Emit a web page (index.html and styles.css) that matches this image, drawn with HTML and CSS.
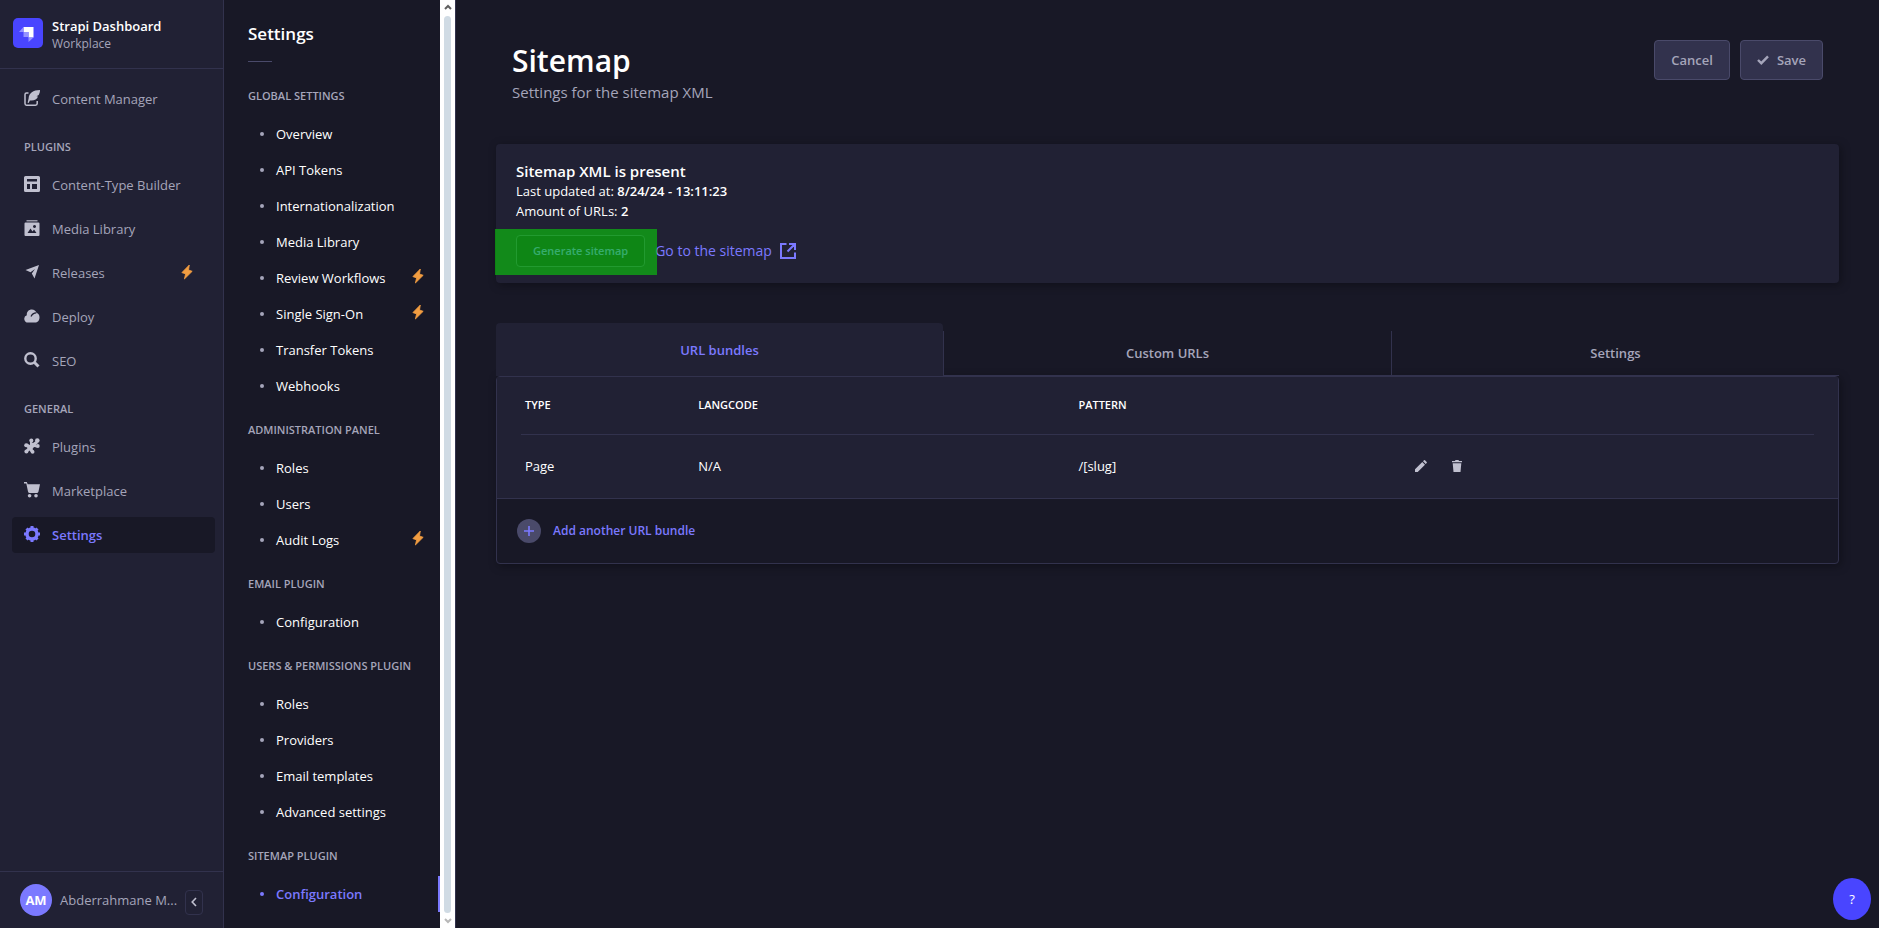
FILE: index.html
```html
<!DOCTYPE html>
<html lang="en">
<head>
<meta charset="utf-8">
<title>Sitemap - Strapi Dashboard</title>
<link rel="stylesheet" href="styles.css">
</head>
<body>
<svg class="defs" aria-hidden="true">
  <symbol id="bolt" viewBox="0 0 12 16"><path d="M8.300 1 .9 8.600 4.600 9.900 3.400 15 11.200 7.300 7.500 6z" stroke="currentColor" stroke-width=".8" stroke-linejoin="round"/></symbol>
</svg>
<div class="app">
  <nav class="nav" aria-label="Main">
    <div class="brand">
      <svg class="logo" viewBox="0 0 30 30"><rect width="30" height="30" rx="5" fill="#4945ff"/><path d="M10.500 9H20.500V19.500H15.500V14H10.500z" fill="#fff"/><path d="M10.500 9V14H6z" fill="#9593ff"/><path d="M10.500 14H15.500V19H10.500z" fill="#9593ff"/><path d="M15.500 19.500H20.500L15.500 24z" fill="#9593ff"/></svg>
      <div class="brand-text">
        <div class="brand-name">Strapi Dashboard</div>
        <div class="brand-sub">Workplace</div>
      </div>
    </div>
    <div class="nav-body">
      <ul class="nav-list">
        <li><a class="nav-link" href="#"><svg class="icon" viewBox="0 0 16 16"><path d="M4.500 3H2.500Q1 3 1 4.500V13.500Q1 15.200 2.500 15.200H11.500Q13.200 15.200 13.200 13.500V11" fill="none" stroke="currentColor" stroke-width="1.500"/><path d="M16 0C9 0 5 3 4.600 8.500L3.600 12.800l1 .3 1.300-2.600C10 11 13 9.500 14 6.500l-1.500-.3 2.200-1.300C15.500 3.500 16 2 16 0z"/></svg>Content Manager</a></li>
      </ul>
      <h2 class="nav-label">Plugins</h2>
      <ul class="nav-list">
        <li><a class="nav-link" href="#"><svg class="icon" viewBox="0 0 16 16"><path fill-rule="evenodd" d="M1.500 0h13Q16 0 16 1.500v13Q16 16 14.500 16h-13Q0 16 0 14.500v-13Q0 0 1.500 0zM3 3v2.500h10V3zM3 8v5h3V8zM8 8v5h5V8z"/></svg>Content-Type Builder</a></li>
        <li><a class="nav-link" href="#"><svg class="icon" viewBox="0 0 16 16"><path opacity=".75" d="M2.500 0h11v1.500h-11z"/><path fill-rule="evenodd" d="M1.500 2.500h13q1 0 1 1v11.500q0 1-1 1h-13q-1 0-1-1V3.500q0-1 1-1zM3.500 13h9L10 9.500 8.500 11.500 6.500 8.500zM10.500 5a1.500 1.500 0 1 0 .01 0z"/></svg>Media Library</a></li>
        <li><a class="nav-link" href="#"><svg class="icon" viewBox="0 0 16 16"><path d="M15 1 1.500 6 6.500 8.300 11 5 7.800 9.600 10.500 14.500z"/></svg>Releases<svg class="bolt"><use href="#bolt"/></svg></a></li>
        <li><a class="nav-link" href="#"><svg class="icon" viewBox="0 0 16 16"><path d="M4 14.500A3.700 3.700 0 0 1 2.800 7.300C2.500 4 4.600 1.500 7.800 1.500c2.400 0 4 1.300 4.700 3.200A5 5 0 0 1 15.500 9.500c0 3-2 5-4.500 5z"/><path d="M7 8.500C8 6.200 9.800 5 12.300 4.900" fill="none" stroke="#212134" stroke-width="1.200"/></svg>Deploy</a></li>
        <li><a class="nav-link" href="#"><svg class="icon" viewBox="0 0 16 16"><circle cx="6.500" cy="6.500" r="5.200" fill="none" stroke="currentColor" stroke-width="2.400"/><path d="m10.500 10.500 4 4" stroke="currentColor" stroke-width="3"/></svg>SEO</a></li>
      </ul>
      <h2 class="nav-label">General</h2>
      <ul class="nav-list">
        <li><a class="nav-link" href="#"><svg class="icon" viewBox="0 0 16 16"><path d="M6 3 9 5 12 3 14 5 12 7 13 9.500 10 9 8.500 11 10 13 7 14.500 5.500 12.500 3 14.500 1.500 12.500 3.500 10 1.500 8 3 5.500 6 7z"/><circle cx="7.300" cy="2.400" r="2"/><circle cx="13.300" cy="2.600" r="2.300"/><circle cx="13.800" cy="8" r="1.900"/><circle cx="2.200" cy="7.200" r="2"/><circle cx="2.400" cy="13.500" r="2"/><circle cx="8.600" cy="13.800" r="1.900"/></svg>Plugins</a></li>
        <li><a class="nav-link" href="#"><svg class="icon" viewBox="0 0 16 16"><path d="M0 0h2.800l.9 2.200H16L14.500 9.500Q14.200 11 12.700 11H5.800Q4.300 11 4 9.500L2.300 1.600H0z"/><circle cx="5.600" cy="13.800" r="1.800"/><circle cx="12" cy="13.800" r="1.800"/></svg>Marketplace</a></li>
        <li><a class="nav-link active" href="#" aria-current="page"><svg class="icon" viewBox="0 0 16 16"><circle cx="8" cy="8" r="5" fill="none" stroke="currentColor" stroke-width="3.400"/><path d="M8 0v3M8 13v3M0 8h3M13 8h3M2.500 2.500l2 2M11.500 11.500l2 2M2.500 13.500l2-2M11.500 4.500l2-2" stroke="currentColor" stroke-width="3"/></svg>Settings</a></li>
      </ul>
    </div>
    <div class="user">
      <span class="avatar">AM</span>
      <span class="user-name">Abderrahmane M...</span>
      <button class="collapse" aria-label="Collapse the navbar"><svg viewBox="0 0 6 10"><path d="M5 1 1.200 5 5 9" fill="none" stroke="currentColor" stroke-width="1.600"/></svg></button>
    </div>
  </nav>

  <aside class="subnav">
    <div class="subnav-body">
      <h2 class="subnav-title">Settings</h2>
      <h3 class="sub-label">Global settings</h3>
      <ul class="sub-list">
        <li><a class="sub-link" href="#">Overview</a></li>
        <li><a class="sub-link" href="#">API Tokens</a></li>
        <li><a class="sub-link" href="#">Internationalization</a></li>
        <li><a class="sub-link" href="#">Media Library</a></li>
        <li><a class="sub-link" href="#">Review Workflows<svg class="bolt"><use href="#bolt"/></svg></a></li>
        <li><a class="sub-link" href="#">Single Sign-On<svg class="bolt"><use href="#bolt"/></svg></a></li>
        <li><a class="sub-link" href="#">Transfer Tokens</a></li>
        <li><a class="sub-link" href="#">Webhooks</a></li>
      </ul>
      <h3 class="sub-label">Administration panel</h3>
      <ul class="sub-list">
        <li><a class="sub-link" href="#">Roles</a></li>
        <li><a class="sub-link" href="#">Users</a></li>
        <li><a class="sub-link" href="#">Audit Logs<svg class="bolt"><use href="#bolt"/></svg></a></li>
      </ul>
      <h3 class="sub-label">Email plugin</h3>
      <ul class="sub-list">
        <li><a class="sub-link" href="#">Configuration</a></li>
      </ul>
      <h3 class="sub-label">Users &amp; Permissions plugin</h3>
      <ul class="sub-list">
        <li><a class="sub-link" href="#">Roles</a></li>
        <li><a class="sub-link" href="#">Providers</a></li>
        <li><a class="sub-link" href="#">Email templates</a></li>
        <li><a class="sub-link" href="#">Advanced settings</a></li>
      </ul>
      <h3 class="sub-label">Sitemap plugin</h3>
      <ul class="sub-list">
        <li><a class="sub-link active" href="#" aria-current="page">Configuration</a></li>
      </ul>
    </div>
    <div class="scrollbar" aria-hidden="true">
      <svg viewBox="0 0 8 6"><path d="M1 5 4 2 7 5" fill="none" stroke="#606060" stroke-width="2"/></svg>
      <div class="thumb"></div>
      <svg viewBox="0 0 8 6"><path d="M1 1 4 4 7 1" fill="none" stroke="#b8b8b8" stroke-width="2"/></svg>
    </div>
  </aside>

  <main class="main">
    <header class="page-head">
      <div>
        <h1>Sitemap</h1>
        <p class="lead">Settings for the sitemap XML</p>
      </div>
      <div class="actions">
        <button class="btn">Cancel</button>
        <button class="btn"><svg class="check" viewBox="0 0 12 10"><path d="M1 5 4.300 8.200 11 1.300" fill="none" stroke="currentColor" stroke-width="2.400"/></svg>Save</button>
      </div>
    </header>

    <section class="card">
      <h2 class="card-title">Sitemap XML is present</h2>
      <p>Last updated at: <strong>8/24/24 - 13:11:23</strong></p>
      <p>Amount of URLs: <strong>2</strong></p>
      <div class="card-actions">
        <div class="marked"><button class="generate">Generate sitemap</button></div>
        <a class="go" href="#">Go to the sitemap<svg viewBox="0 0 16 16"><path d="M6.500 1H1v14h14V9.500M9 1h6v6M15 1 7.500 8.500" fill="none" stroke="currentColor" stroke-width="2"/></svg></a>
      </div>
    </section>

    <div class="tabs" role="tablist">
      <button class="tab selected" role="tab" aria-selected="true">URL bundles</button>
      <button class="tab" role="tab" aria-selected="false">Custom URLs</button>
      <button class="tab" role="tab" aria-selected="false">Settings</button>
    </div>
    <section class="panel" role="tabpanel">
      <div class="table-wrap">
        <table>
          <colgroup><col class="c-type"><col class="c-lang"><col class="c-pattern"><col></colgroup>
          <thead><tr><th>Type</th><th>Langcode</th><th>Pattern</th><th></th></tr></thead>
          <tbody><tr><td>Page</td><td>N/A</td><td>/[slug]</td><td>
            <div class="row-actions">
              <button aria-label="Edit"><svg viewBox="0 0 12 12"><path d="M0 12V9.300L7.300 2 10 4.700 2.700 12zM8 1.300 9 .3Q9.500-.1 10 .3L11.700 2Q12.100 2.500 11.700 3l-1 1z"/></svg></button>
              <button aria-label="Delete"><svg viewBox="0 0 12 12"><path d="M1 1h3L4.500 0h3L8 1h3v1.200H1zM1.700 3.200h8.600L9.500 12h-7z"/></svg></button>
            </div>
          </td></tr></tbody>
        </table>
      </div>
      <button class="add"><span class="plus"><svg viewBox="0 0 10 10"><path d="M5 0v10M0 5h10" stroke="currentColor" stroke-width="1.600"/></svg></span>Add another URL bundle</button>
    </section>
  </main>
  <button class="help" aria-label="Help">?</button>
</div>
</body>
</html>
```
FILE: styles.css
```css
* { box-sizing: border-box; }
body {
  margin: 0;
  background: #181826;
  color: #fff;
  font: 13px/20px "Segoe UI", "Open Sans", "Noto Sans", sans-serif;
}
h1, h2, h3, p, ul { margin: 0; padding: 0; }
ul { list-style: none; }
a { color: inherit; text-decoration: none; }
button { font: inherit; color: inherit; background: none; border: 0; padding: 0; cursor: pointer; }
svg { fill: currentColor; flex: none; }
.defs { position: absolute; width: 0; height: 0; }
.app { display: flex; height: 100vh; }

.nav {
  display: flex;
  flex-direction: column;
  width: 224px;
  flex: none;
  background: #212134;
  border-right: 1px solid #32324d;
  color: #a5a5ba;
}
.brand { display: flex; align-items: center; gap: 9px; height: 69px; padding: 0 13px; border-bottom: 1px solid #32324d; }
.brand-text { padding-top: 2px; }
.logo { width: 30px; height: 30px; margin-bottom: 2px; }
.brand-name { color: #fff; font-size: 13px; line-height: 18px; font-weight: 600; }
.brand-sub { font-size: 12px; line-height: 18px; }
.nav-body { flex: 1; padding: 12px 8px 12px 12px; }
.nav-list { display: flex; flex-direction: column; gap: 8px; }
.nav-label { margin: 22px 12px 12px; font-size: 11px; line-height: 16px; font-weight: 600; text-transform: uppercase; }
.nav-link { display: flex; align-items: center; height: 36px; padding: 0 12px; border-radius: 4px; }
.icon { width: 16px; height: 16px; margin: 0 12px 2px 0; color: #c0c0cf; }
.nav-link.active { background: #181826; color: #7b79ff; font-weight: 600; }
.active .icon { color: #7b79ff; }
.bolt { width: 12px; height: 16px; margin-left: auto; margin-bottom: 4px; color: #f29d41; }
.nav-link .bolt { margin-right: 10px; margin-bottom: 2px; }
.user { display: flex; align-items: center; gap: 8px; height: 57px; padding: 0 20px; border-top: 1px solid #32324d; }
.avatar { display: grid; place-items: center; flex: none; width: 32px; height: 32px; border-radius: 50%; background: #7b79ff; color: #fff; font-weight: 700; }
.user-name { flex: 1; min-width: 0; white-space: nowrap; }
.collapse { display: grid; place-items: center; flex: none; width: 18px; height: 25px; margin-top: 4px; border: 1px solid #32324d; border-radius: 4px; color: #c0c0cf; }
.collapse svg { width: 6px; height: 10px; }

.subnav { display: flex; width: 232px; flex: none; border-right: 1px solid #32324d; }
.subnav-body { flex: 1; }
.subnav-title { padding: 22px 24px 0; font-size: 17px; line-height: 24px; font-weight: 600; }
.subnav-title::after { content: ""; display: block; width: 24px; height: 1px; margin: 15px 0 26px; background: #4a4a6a; }
.sub-label { margin: 0 24px 12px; color: #a5a5ba; font-size: 11px; line-height: 16px; font-weight: 600; text-transform: uppercase; }
.sub-list { margin-bottom: 18px; }
.sub-link { display: flex; align-items: center; height: 36px; padding: 0 16px 0 36px; }
.sub-link::before { content: ""; width: 4px; height: 4px; margin-right: 12px; border-radius: 50%; background: #a5a5ba; }
.sub-link.active { color: #7b79ff; font-weight: 600; border-right: 2px solid #7b79ff; }
.sub-link.active::before { background: #7b79ff; }
.scrollbar { display: flex; flex-direction: column; align-items: center; justify-content: space-between; width: 15px; padding: 4px 0; background: #fff; }
.scrollbar svg { width: 8px; height: 6px; }
.thumb { flex: 1; width: 7px; margin: 6px 0 5px; border-radius: 4px; background: #d0dbe4; }

.main { flex: 1; min-width: 0; padding: 40px; }
.page-head { display: flex; justify-content: space-between; align-items: flex-start; padding: 0 16px; margin-bottom: 41px; }
h1 { font-size: 30px; line-height: 42px; font-weight: 600; }
.lead { color: #a5a5ba; font-size: 15px; line-height: 21px; }
.actions { display: flex; gap: 10px; }
.btn { display: flex; align-items: center; gap: 8px; height: 40px; padding: 0 16px; border: 1px solid #4a4a6a; border-radius: 4px; background: #32324d; color: #a5a5ba; font-weight: 600; }
.check { width: 12px; height: 10px; }

.card { padding: 17px 20px 16px; margin-bottom: 40px; border-radius: 4px; background: #212134; box-shadow: 2px 2px 10px rgba(3, 3, 5, .35); }
.card-title { font-size: 15px; line-height: 20px; font-weight: 600; }
.card strong { font-weight: 600; }
.card-actions { display: flex; align-items: center; gap: 10px; margin-top: 14px; }
.marked { position: relative; }
.marked::after { content: ""; position: absolute; inset: -6px -12px -8px -21px; background: rgba(8, 208, 10, .6); pointer-events: none; }
.generate { display: block; height: 32px; padding: 0 16px; border: 1px solid #4a4a6a; border-radius: 4px; background: #181826; color: #7b79ff; font-size: 11px; font-weight: 600; }
.go { display: flex; align-items: center; gap: 8px; color: #7b79ff; font-size: 14px; }
.go svg { width: 16px; height: 16px; }

.tabs { display: flex; align-items: flex-end; }
.tab { flex: 1; height: 45px; border-left: 1px solid #32324d; border-bottom: 1px solid #32324d; color: #a5a5ba; font-weight: 600; }
.tab.selected { height: 53px; background: #212134; border: 0; border-radius: 4px 4px 0 0; color: #7b79ff; }
.panel { border: 1px solid #32324d; border-radius: 4px; box-shadow: 2px 2px 10px rgba(3, 3, 5, .35); }
.table-wrap { padding: 0 24px; background: #212134; border-bottom: 1px solid #32324d; }
table { width: 100%; border-collapse: collapse; table-layout: fixed; }
.c-type { width: 13.4%; }
.c-lang { width: 29.4%; }
.c-pattern { width: 26%; }
th { height: 57px; padding: 0 4px; text-align: left; font-size: 11px; font-weight: 600; text-transform: uppercase; border-bottom: 1px solid #32324d; }
td { height: 64px; padding: 0 4px; }
.row-actions { display: flex; gap: 24px; color: #c0c0cf; }
.row-actions svg { display: block; width: 12px; height: 12px; }
.add { display: flex; align-items: center; gap: 12px; width: 100%; height: 64px; padding: 0 20px; color: #7b79ff; font-size: 12px; font-weight: 600; }
.plus { display: grid; place-items: center; width: 24px; height: 24px; border-radius: 50%; background: #4a4a6a; }
.plus svg { width: 10px; height: 10px; }
.help { position: fixed; right: 8px; bottom: 8px; width: 38px; height: 42px; border-radius: 50%; background: #4945ff; font-size: 13px; }
```
